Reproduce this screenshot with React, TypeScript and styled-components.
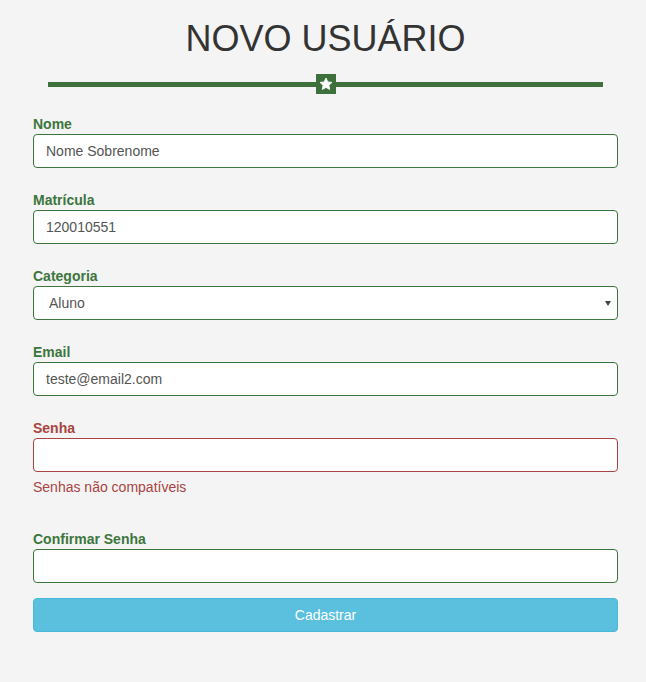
import React from "react";
import styled, { createGlobalStyle } from "styled-components";

const GlobalStyle = createGlobalStyle`
  html, body {
    margin: 0;
    padding: 0;
    background: #f4f4f4;
    font-family: "Liberation Sans", Arial, sans-serif;
    font-size: 14px;
    color: #333;
  }
`;

const GREEN = "#3c763d";
const RED = "#a94442";

const Page = styled.div`
  min-height: 682px;
  background: #f4f4f4;
  padding: 19px 0 0 33px;
  box-sizing: border-box;
`;

const Wrapper = styled.div`
  width: 585px;
`;

const Title = styled.h1`
  margin: 0;
  font-size: 36px;
  font-weight: 400;
  line-height: 40px;
  text-align: center;
  color: #333;
`;

const Divider = styled.div`
  display: flex;
  align-items: center;
  height: 20px;
  margin: 15px 15px 20px;
`;

const Rule = styled.div`
  flex: 1;
  height: 5px;
  background: #3e703c;
`;

const StarBox = styled.div`
  width: 20px;
  height: 20px;
  background: #3e703c;
  display: flex;
  align-items: center;
  justify-content: center;
`;

const Group = styled.div<{ $error?: boolean }>`
  display: flex;
  flex-direction: column;
  margin-bottom: 22px;
  color: ${(p) => (p.$error ? RED : GREEN)};
`;

const Label = styled.label`
  display: block;
  font-weight: 700;
  line-height: 20px;
`;

const Field = styled.input<{ $error?: boolean }>`
  display: block;
  box-sizing: border-box;
  width: 100%;
  height: 34px;
  padding: 6px 12px;
  font-family: inherit;
  font-size: 14px;
  color: #555;
  background: #fff;
  border: 1px solid ${(p) => (p.$error ? RED : GREEN)};
  border-radius: 4px;
  outline: none;
`;

const SelectWrap = styled.div`
  position: relative;
`;

const Select = styled.select`
  display: block;
  box-sizing: border-box;
  width: 100%;
  height: 34px;
  padding: 6px 24px 6px 15px;
  font-family: inherit;
  font-size: 14px;
  color: #555;
  background: #fff;
  border: 1px solid ${GREEN};
  border-radius: 4px;
  outline: none;
  appearance: none;
`;

const Caret = styled.span`
  position: absolute;
  right: 7px;
  top: 15px;
  width: 0;
  height: 0;
  border-left: 3px solid transparent;
  border-right: 3px solid transparent;
  border-top: 5px solid #444;
  pointer-events: none;
`;

const Help = styled.div`
  margin: 5px 0 10px;
  line-height: 20px;
  color: ${RED};
`;

const Submit = styled.button`
  display: block;
  width: 100%;
  height: 34px;
  margin-top: -7px;
  font-family: inherit;
  font-size: 14px;
  color: #fff;
  background: #5bc0de;
  border: 1px solid #46b8da;
  border-radius: 4px;
`;

const Star = () => (
  <svg width="14" height="14" viewBox="0 0 24 24">
    <path
      d="M12 1.8l3.1 6.6 7.1.9-5.2 4.9 1.3 7.1L12 17.8l-6.3 3.5 1.3-7.1-5.2-4.9 7.1-.9z"
      fill="#fff"
      stroke="#fff"
      strokeWidth="1.5"
      strokeLinejoin="round"
    />
  </svg>
);

export default function App() {
  return (
    <>
      <GlobalStyle />
      <Page>
        <Wrapper>
          <Title>NOVO USUÁRIO</Title>
          <Divider>
            <Rule />
            <StarBox>
              <Star />
            </StarBox>
            <Rule />
          </Divider>

          <Group>
            <Label>Nome</Label>
            <Field defaultValue="Nome Sobrenome" />
          </Group>
          <Group>
            <Label>Matrícula</Label>
            <Field defaultValue="120010551" />
          </Group>
          <Group>
            <Label>Categoria</Label>
            <SelectWrap>
              <Select defaultValue="Aluno">
                <option>Aluno</option>
                <option>Professor</option>
              </Select>
              <Caret />
            </SelectWrap>
          </Group>
          <Group>
            <Label>Email</Label>
            <Field defaultValue="teste@email2.com" />
          </Group>
          <Group $error>
            <Label>Senha</Label>
            <Field type="password" $error />
            <Help>Senhas não compatíveis</Help>
          </Group>
          <Group>
            <Label>Confirmar Senha</Label>
            <Field type="password" />
          </Group>
          <Submit>Cadastrar</Submit>
        </Wrapper>
      </Page>
    </>
  );
}
